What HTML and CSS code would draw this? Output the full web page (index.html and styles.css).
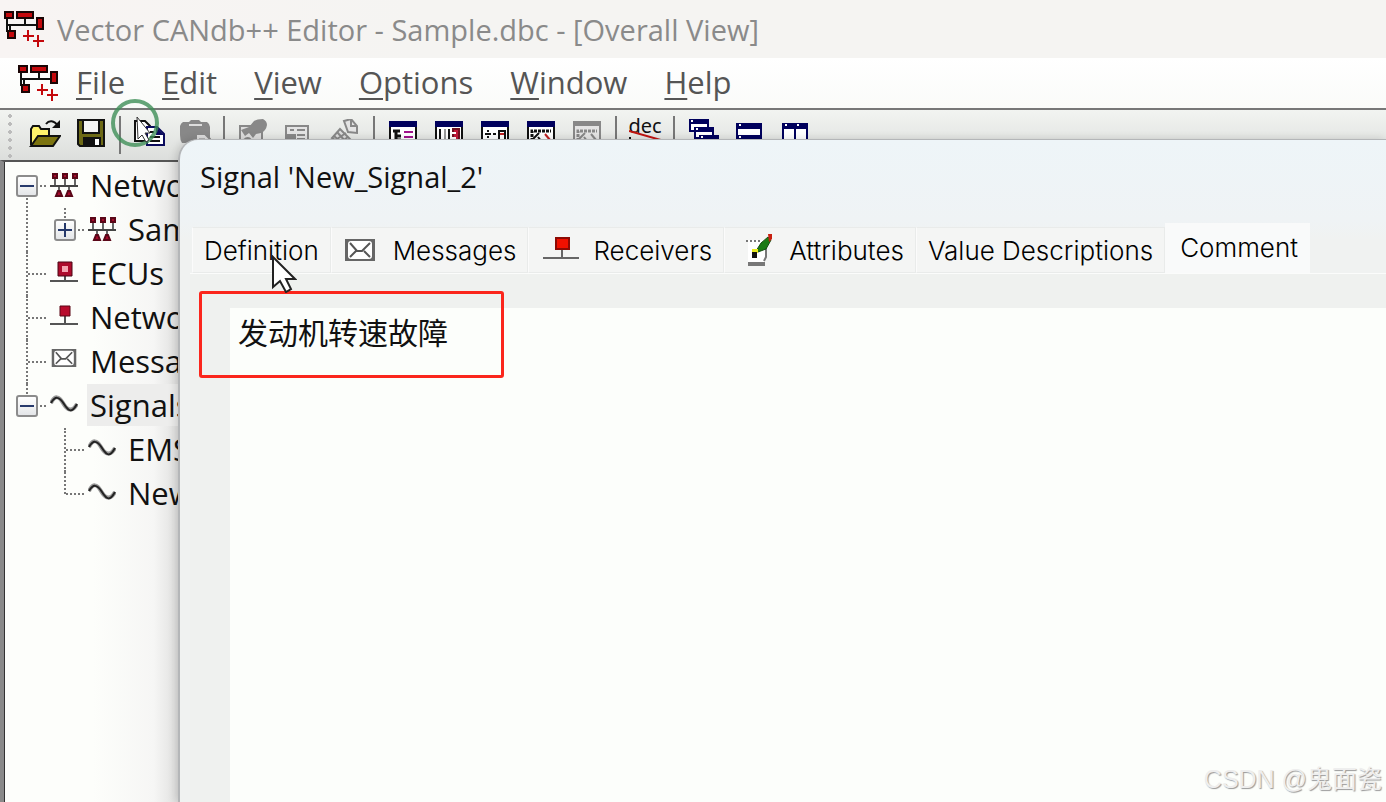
FILE: index.html
```html
<!DOCTYPE html>
<html lang="en">
<head>
  <meta charset="UTF-8">
  <meta name="viewport" content="width=device-width, initial-scale=1.0">
  <title>Vector CANdb++ Editor</title>
  <link rel="stylesheet" href="styles.css">
</head>
<body>

  <!-- shared icons -->
  <svg class="sprite" aria-hidden="true">
    <symbol id="logo" viewBox="0 0 42 38">
      <path d="M3 8v14M3 15h30M21 8v7M6 15v6" fill="none" stroke="#111" stroke-width="2"/>
      <g fill="#c4080c" stroke="#1a0505" stroke-width="2">
        <path d="M1 2h8v6H1zM13 2h16v6H13zM33 8h6v11h-6zM4 21h7v7H4z"/>
      </g>
      <path d="M19 26h11M24 20v11M29 31h11M34 25v12" fill="none" stroke="#c4080c" stroke-width="2"/>
    </symbol>
    <symbol id="network" viewBox="0 0 28 24">
      <path d="M0 13h28" stroke="#444" stroke-width="2"/>
      <path d="M5 5v7M15 5v7M25 5v7M9 14v7M19 14v7" stroke="#666" stroke-width="2"/>
      <path d="M3 1h4v4H3zM13 1h4v4h-4zM23 1h4v4h-4zM8 18h2l2 5H6zM18 18h2l2 5h-6z" fill="#a80a2c" stroke="#5a0718" stroke-width="2"/>
    </symbol>
    <symbol id="ecu" viewBox="0 0 28 24">
      <path d="M0 20h28M15 14v6" stroke="#555" stroke-width="2"/>
      <path d="M10 3h10v10H10z" fill="#f3a5b0" stroke="#ad0c2c" stroke-width="4"/>
      <path d="M8 1h14v14H8z" fill="none" stroke="#4a0714"/>
    </symbol>
    <symbol id="node" viewBox="0 0 28 24">
      <path d="M0 19h28M15 10v9" stroke="#555" stroke-width="2"/>
      <path d="M10 1h10v10H10z" fill="#b80c2c" stroke="#5a0714"/>
    </symbol>
    <symbol id="envelope" viewBox="0 0 30 22">
      <path d="M0 0h30v22H0z" fill="#666"/>
      <rect x="3" y="2" width="24" height="18" rx="3" fill="#fff"/>
      <path d="M5 4l7 8h5l8-8M5 18l6-6M25 18l-6-6" fill="none" stroke="#555" stroke-width="2"/>
    </symbol>
    <symbol id="wave" viewBox="0 0 28 24">
      <path d="M1 10C5 2 9 3 13 10s9 10 14 1" fill="none" stroke="#999" stroke-width="4"/>
      <path d="M1 10C5 3 9 3 14 11s8 9 13 0" fill="none" stroke="#222" stroke-width="2"/>
    </symbol>
  </svg>

  <header class="titlebar">
    <svg class="logo"><use href="#logo"/></svg>
    <h1>Vector CANdb++ Editor - Sample.dbc - [Overall View]</h1>
  </header>

  <nav class="menubar">
    <svg class="logo"><use href="#logo"/></svg>
    <button><u>F</u>ile</button>
    <button><u>E</u>dit</button>
    <button><u>V</u>iew</button>
    <button><u>O</u>ptions</button>
    <button><u>W</u>indow</button>
    <button><u>H</u>elp</button>
  </nav>

  <div class="toolbar">
    <span class="grip"></span>
    <button aria-label="Open">
      <svg viewBox="0 0 32 32"><path d="M2 26V10l2-3h6l2 3h8v7" fill="#fff36b" stroke="#111" stroke-width="2"/><path d="M2 27l7-10h22l-7 10z" fill="#7c7410" stroke="#111" stroke-width="2"/><path d="M17 5c3-4 8-4 12 2" fill="none" stroke="#111" stroke-width="2"/><path d="M31 1v8h-8z" fill="#111"/></svg>
    </button>
    <button aria-label="Save">
      <svg viewBox="0 0 32 32"><path d="M3 1h26v26H5l-2-2z" fill="#6d6a16" stroke="#111" stroke-width="2"/><path d="M8 1h16v13H8z" fill="#f4f4f4" stroke="#111" stroke-width="2"/><path d="M8 18h18v9H8z" fill="#111"/><path d="M20 20h4v6h-4z" fill="#fff"/></svg>
    </button>
    <span class="sep"></span>
    <button aria-label="Copy">
      <svg viewBox="0 0 32 32"><path d="M2 2h10l5 5v15H2z" fill="#fff" stroke="#111" stroke-width="2"/><path d="M5 8h5M5 12h8M5 16h8" stroke="#111" stroke-width="2"/><path d="M14 8h10l7 7v11H14z" fill="#fff" stroke="#0a0a5c" stroke-width="2"/><path d="M23 8v8h8z" fill="#0a0a5c"/><path d="M17 13h4M17 18h10M17 22h10" stroke="#111" stroke-width="2"/></svg>
    </button>
    <button aria-label="Paste" disabled>
      <svg viewBox="0 0 32 32"><path d="M4 3h6l2-2h8l2 2h6q3 2 3 5v16H3q-2-3-2-8V7q1-3 3-4z" fill="#888"/><path d="M10 6h13" stroke="#ddd" stroke-width="2"/><path d="M17 15h9l5 5v10H17z" fill="#ddd" stroke="#888" stroke-width="2"/><path d="M20 21h6" stroke="#888" stroke-width="3"/></svg>
    </button>
    <span class="sep"></span>
    <button aria-label="Properties" disabled>
      <svg viewBox="0 0 32 32"><path d="M3 7h22v23H3z" fill="#ddd" stroke="#888" stroke-width="2"/><path d="M4 11l8-3 5-6q3-2 9-2 4 2 4 6-1 6-6 8l-5 1-3 4-4-5-4 3z" fill="#888"/><path d="M7 21q4-4 7 0M17 21h5" fill="none" stroke="#888" stroke-width="2"/></svg>
    </button>
    <button aria-label="Details" disabled>
      <svg viewBox="0 0 32 32"><path d="M3 7h22v23H3z" fill="#e4e4e4" stroke="#888" stroke-width="2"/><path d="M4 15h9v14H4z" fill="#888"/><path d="M7 11h4M14 11h8M14 16h8M14 20h8" stroke="#888" stroke-width="2"/></svg>
    </button>
    <button aria-label="Attributes" disabled>
      <svg viewBox="0 0 32 32"><path d="M15 2l7-2 6 7v7l-9-1z" fill="#e4e4e4" stroke="#888" stroke-width="2"/><path d="M22 0v7h6" fill="none" stroke="#888" stroke-width="2"/><path d="M11 10l10 10-5 7L3 19z" fill="#ddd" stroke="#888" stroke-width="2"/><path d="M8 13l9 10M5 17l9 8M5 22l12-8M9 25l10-7" stroke="#888" stroke-width="2"/></svg>
    </button>
    <span class="sep"></span>
    <button aria-label="Overall view">
      <svg viewBox="0 0 32 32"><path d="M3 3h26v26H3z" fill="#fff" stroke="#111" stroke-width="2"/><path d="M2 2h28v6H2z" fill="#00005c"/><path d="M6 12h7M9 11v14M9 17h5M9 21h5" stroke="#111" stroke-width="3"/><path d="M17 13h9M17 18h9M17 23h9" stroke="#a0148c" stroke-width="2"/></svg>
    </button>
    <button aria-label="Matrix view">
      <svg viewBox="0 0 32 32"><path d="M3 3h26v26H3z" fill="#fff" stroke="#111" stroke-width="2"/><path d="M2 2h28v6H2z" fill="#00005c"/><path d="M7 10v16M16 10v16" stroke="#111" stroke-width="2"/><path d="M12 10v16" stroke="#999" stroke-width="2"/><path d="M20 10h6v17h-6z" fill="#c01838" stroke="#701020" stroke-width="2"/><path d="M19 14h4M19 19h4" stroke="#fff" stroke-width="2"/></svg>
    </button>
    <button aria-label="Receive view">
      <svg viewBox="0 0 32 32"><path d="M3 3h26v26H3z" fill="#fff" stroke="#111" stroke-width="2"/><path d="M2 2h28v6H2z" fill="#00005c"/><path d="M6 15h6M9 11v2M9 17v2M14 15h3" stroke="#111" stroke-width="2"/><path d="M20 12h6v16h-6z" fill="#fff" stroke="#111" stroke-width="2"/><path d="M21 15h4" stroke="#c02020" stroke-width="2"/></svg>
    </button>
    <button aria-label="Graph view">
      <svg viewBox="0 0 32 32"><path d="M3 3h26v26H3z" fill="#fff" stroke="#111" stroke-width="2"/><path d="M2 2h28v6H2z" fill="#00005c"/><path d="M7 26V12h19" fill="none" stroke="#111" stroke-width="3" stroke-dasharray="3 1"/><path d="M8 20l6-6M13 18l4 5" stroke="#111" stroke-width="2"/><path d="M20 15l5 6" stroke="#c02020" stroke-width="2"/></svg>
    </button>
    <button aria-label="Graph options" disabled>
      <svg viewBox="0 0 32 32"><path d="M3 3h26v26H3z" fill="#e4e4e4" stroke="#888" stroke-width="2"/><path d="M2 2h28v5H2z" fill="#888"/><path d="M7 26V12h19" fill="none" stroke="#888" stroke-width="3" stroke-dasharray="3 1"/><path d="M8 20l6-6M13 18l4 5M20 15l5 6" stroke="#888" stroke-width="2"/></svg>
    </button>
    <span class="sep"></span>
    <button class="dec" aria-label="Decimal">
      <span>dec</span>
      <svg viewBox="0 0 32 32"><path d="M0 12l32 9" stroke="#c01410" stroke-width="2"/><path d="M1 18v12" stroke="#111" stroke-width="2"/></svg>
    </button>
    <span class="sep"></span>
    <button aria-label="Cascade">
      <svg viewBox="0 0 32 32"><g fill="#fff" stroke="#00005c" stroke-width="2"><path d="M3 2h18v10H3z"/><path d="M8 9h18v10H8z"/><path d="M13 17h18v12H13z"/></g><path d="M2 0h20v5H2zM7 8h20v5H7zM12 16h20v6H12z" fill="#00005c"/><path d="M4 2h2M9 10h2M14 18h2" stroke="#fff" stroke-width="2"/></svg>
    </button>
    <button aria-label="Tile horizontally">
      <svg viewBox="0 0 32 32"><path d="M4 5h24v23H4z" fill="#fff" stroke="#00005c" stroke-width="2"/><path d="M3 4h26v6H3zM3 16h26v6H3z" fill="#00005c"/><path d="M6 6h2M6 18h2" stroke="#fff" stroke-width="2"/></svg>
    </button>
    <button aria-label="Tile vertically">
      <svg viewBox="0 0 32 32"><path d="M4 5h24v23H4zM16 5v23" fill="#fff" stroke="#00005c" stroke-width="2"/><path d="M3 4h26v6H3z" fill="#00005c"/><path d="M6 6h2M18 6h2" stroke="#fff" stroke-width="2"/></svg>
    </button>
  </div>

  <main class="workspace">
    <ul class="tree">
      <li>
        <div class="row"><button class="toggle minus" aria-label="Collapse"></button><svg><use href="#network"/></svg><span class="label">Networks</span></div>
        <ul>
          <li><div class="row"><button class="toggle plus" aria-label="Expand"></button><svg><use href="#network"/></svg><span class="label">Sample</span></div></li>
        </ul>
      </li>
      <li><div class="row leaf"><svg><use href="#ecu"/></svg><span class="label">ECUs</span></div></li>
      <li><div class="row leaf"><svg><use href="#node"/></svg><span class="label">Network nodes</span></div></li>
      <li><div class="row leaf"><svg class="mail"><use href="#envelope"/></svg><span class="label">Messages</span></div></li>
      <li>
        <div class="row"><button class="toggle minus" aria-label="Collapse"></button><svg><use href="#wave"/></svg><span class="label selected">Signals</span></div>
        <ul>
          <li><div class="row leaf"><svg><use href="#wave"/></svg><span class="label">EMS</span></div></li>
          <li><div class="row leaf"><svg><use href="#wave"/></svg><span class="label">New_Signal_2</span></div></li>
        </ul>
      </li>
    </ul>
  </main>

  <section class="dialog" role="dialog" aria-labelledby="dialogTitle">
    <h2 id="dialogTitle">Signal 'New_Signal_2'</h2>
    <div class="tabs" role="tablist">
      <button role="tab">Definition</button>
      <button role="tab"><svg class="tab-mail"><use href="#envelope"/></svg>Messages</button>
      <button role="tab">
        <svg class="tab-icon" viewBox="0 0 36 34"><path d="M0 25h36M19 15v10" stroke="#666" stroke-width="2"/><path d="M13 5h13v11H13z" fill="#f01000" stroke="#8c0a04" stroke-width="2"/></svg>Receivers
      </button>
      <button role="tab">
        <svg class="tab-icon" viewBox="0 0 36 34"><path d="M9 7h18v20l-3 4H9z" fill="#fff"/><path d="M7 8h15" stroke="#777" stroke-width="2" stroke-dasharray="2 2"/><path d="M25 28l2-4V10" fill="none" stroke="#777" stroke-width="2"/><path d="M9 31h17" stroke="#777" stroke-width="4"/><path d="M17 18l5-8 7-6 3 3-5 9-8 3z" fill="#1c7a14" stroke="#164e10"/><path d="M29 1h4v5l-3 3z" fill="#c82010"/><path d="M13 16h6v4h-6z" fill="#e8e820"/><path d="M13 19h5v6h-5z" fill="#111"/></svg>Attributes
      </button>
      <button role="tab">Value Descriptions</button>
      <button role="tab" class="active" aria-selected="true">Comment</button>
    </div>
    <div class="panel">
      <textarea aria-label="Comment" spellcheck="false">发动机转速故障</textarea>
      <div class="highlight"></div>
    </div>
  </section>

  <div class="click-ring">
    <svg viewBox="0 0 48 48"><circle cx="24" cy="24" r="22" fill="none" stroke="#3f8f58" stroke-opacity=".8" stroke-width="4"/><path d="M26 18l1 22 4-4 4 7 3-2-4-7h5z" fill="#fff" stroke="#333"/></svg>
  </div>
  <svg class="cursor" viewBox="0 0 26 38"><path d="M2 2v30l7-6 6 11 5-3-5-10h9z" fill="#fff" stroke="#222" stroke-width="2"/></svg>
  <div class="watermark">CSDN @鬼面瓷</div>

</body>
</html>
```
FILE: styles.css
```css
* {
  box-sizing: border-box;
}
body {
  font-family: "Open Sans", "Noto Sans CJK SC", sans-serif;
  display: flex;
  flex-direction: column;
  height: 100vh;
  margin: 0;
  overflow: hidden;
  position: relative;
  background: #f5f4f2;
  color: #111;
}
button {
  font: inherit;
  color: inherit;
  border: none;
  background: none;
  padding: 0;
}
.sprite {
  display: none;
}
.logo {
  width: 42px;
  height: 38px;
  flex: none;
}
.titlebar {
  display: flex;
  align-items: center;
  gap: 11px;
  height: 58px;
  padding-left: 4px;
  background: linear-gradient(to right, #f8f4f3, #f5f4f2 30%);
}
.titlebar h1 {
  margin: 0;
  font-size: 29px;
  font-weight: 400;
  color: #8a8a8a;
  white-space: nowrap;
}
.menubar {
  display: flex;
  align-items: center;
  gap: 37px;
  height: 50px;
  padding-left: 18px;
  background: linear-gradient(#fff, #fafbf9);
  font-size: 31px;
  line-height: 40px;
  color: #555;
}
.menubar button {
  padding-bottom: 2px;
}
.menubar .logo {
  margin-right: -21px;
}
.menubar u {
  text-underline-offset: 4px;
  text-decoration-thickness: 2px;
}

.toolbar {
  display: flex;
  align-items: center;
  height: 52px;
  border-top: 2px solid #777;
  background: linear-gradient(to bottom, #f2f4f1, #dcdedc);
}
.toolbar button {
  width: 46px;
  height: 32px;
  display: flex;
  justify-content: center;
}
.toolbar svg {
  width: 32px;
  height: 32px;
}
.grip {
  width: 22px;
  height: 46px;
  background: radial-gradient(circle, #bbb 2px, transparent 2px) 6px 0 / 8px 8px repeat-y;
}
.sep {
  width: 2px;
  height: 38px;
  margin: 0 5px;
  background: #777;
}
.toolbar .dec {
  position: relative;
  font-family: "Noto Sans", sans-serif;
  font-size: 20px;
  line-height: 14px;
}
.dec svg {
  position: absolute;
  top: 0;
  left: 7px;
}

.workspace {
  flex: 1;
  border-left: 4px solid #8a8a8a;
  border-top: 2px solid #555;
  background: #fdfefb;
}
.tree,
.tree ul {
  list-style: none;
  margin: 0;
  padding: 0;
}
.tree {
  width: 176px;
  padding: 2px 0 0 3px;
  overflow: hidden;
  height: 100%;
  border-left: 1px solid #333;
  background: linear-gradient(to right, #fdfefb 50%, #f6f6f5 85%, #dededd);
}
.tree ul {
  padding-left: 38px;
}
.tree li {
  position: relative;
}
/* dotted connector lines */
.tree li::before {
  content: "";
  position: absolute;
  left: 18px;
  top: 0;
  bottom: 0;
  border-left: 2px dotted #777;
}
.tree > li:first-child::before {
  top: 22px;
}
.tree li:last-child::before {
  bottom: auto;
  height: 22px;
}
.row {
  display: flex;
  align-items: center;
  height: 44px;
  font-size: 31px;
  white-space: nowrap;
  position: relative;
}
.row::before {
  content: "";
  position: absolute;
  left: 20px;
  width: 18px;
  top: 21px;
  border-top: 2px dotted #777;
}
.row svg {
  width: 28px;
  height: 24px;
  margin: 0 9px 2px 4px;
  flex: none;
}
.row svg.mail {
  height: 18px;
  margin-bottom: 8px;
}
.leaf {
  padding-left: 38px;
}
.toggle {
  position: relative;
  width: 22px;
  height: 22px;
  margin: 0 8px;
  flex: none;
  border: 2px solid #8c8c8c;
  border-radius: 3px;
  background: linear-gradient(#fff, #e4e6e8);
}
.toggle::before,
.plus::after {
  content: "";
  position: absolute;
  left: 2px;
  top: 8px;
  width: 14px;
  height: 2px;
  background: #26396b;
}
.plus::after {
  transform: rotate(90deg);
}
.label {
  line-height: 42px;
  margin-bottom: 2px;
  padding: 0 3px;
}
.selected {
  flex: 1;
  background: #ededec;
}

.dialog {
  position: absolute;
  left: 178px;
  top: 139px;
  right: 0;
  bottom: 0;
  display: flex;
  flex-direction: column;
  border: 2px solid #b4b6b8;
  border-width: 1px 0 0 2px;
  border-top-left-radius: 20px;
  background: linear-gradient(#eef5f8, #eff3f5 80px, #f0f2f1 100px);
  box-shadow: -2px 0 8px rgba(0, 0, 0, 0.15);
}
.dialog h2 {
  margin: 0;
  padding: 15px 20px 0;
  height: 83px;
  font-size: 29px;
  line-height: 44px;
  font-weight: 400;
}
.tabs {
  display: flex;
  align-items: flex-end;
  height: 50px;
  padding-left: 12px;
  font-family: Inter, sans-serif;
  font-size: 26px;
  font-weight: 300;
  color: #000;
}
.tabs button {
  display: flex;
  align-items: center;
  height: 46px;
  padding: 0 11px;
  background: #f4f5f4;
  border: 1px solid #e9ebea;
  border-left-color: #fbfbfb;
  white-space: nowrap;
}
.tabs .active {
  height: 50px;
  padding: 0 11px 2px 14px;
  background: #f9fafa;
  border-color: #f9fafa;
}
.tab-mail {
  width: 30px;
  height: 22px;
  margin: 0 18px 0 2px;
}
.tab-icon {
  width: 36px;
  height: 34px;
  margin: 0 14px 0 3px;
}
.panel {
  flex: 1;
  display: flex;
  position: relative;
  margin-left: 10px;
  padding: 34px 0 0 40px;
  border-top: 1px solid #fbfcfb;
  background: #eff1ef;
}
.panel textarea {
  flex: 1;
  border: none;
  outline: none;
  resize: none;
  padding: 1px 8px;
  background: #fcfefb;
  color: #111;
  font-family: "Noto Sans CJK SC", sans-serif;
  font-size: 30px;
  line-height: 44px;
}
.highlight {
  position: absolute;
  left: 9px;
  top: 17px;
  width: 305px;
  height: 87px;
  border: 3px solid #fb261c;
  border-radius: 3px;
}
.click-ring {
  position: absolute;
  left: 111px;
  top: 99px;
  width: 48px;
  height: 48px;
}
.cursor {
  position: absolute;
  left: 271px;
  top: 255px;
  width: 26px;
  height: 38px;
}
.watermark {
  position: absolute;
  right: 4px;
  bottom: 4px;
  font-family: "Liberation Sans", "Noto Sans CJK SC", sans-serif;
  font-size: 25px;
  line-height: 38px;
  color: #eee;
  text-shadow: 1px 1px 1px #999;
}
```
